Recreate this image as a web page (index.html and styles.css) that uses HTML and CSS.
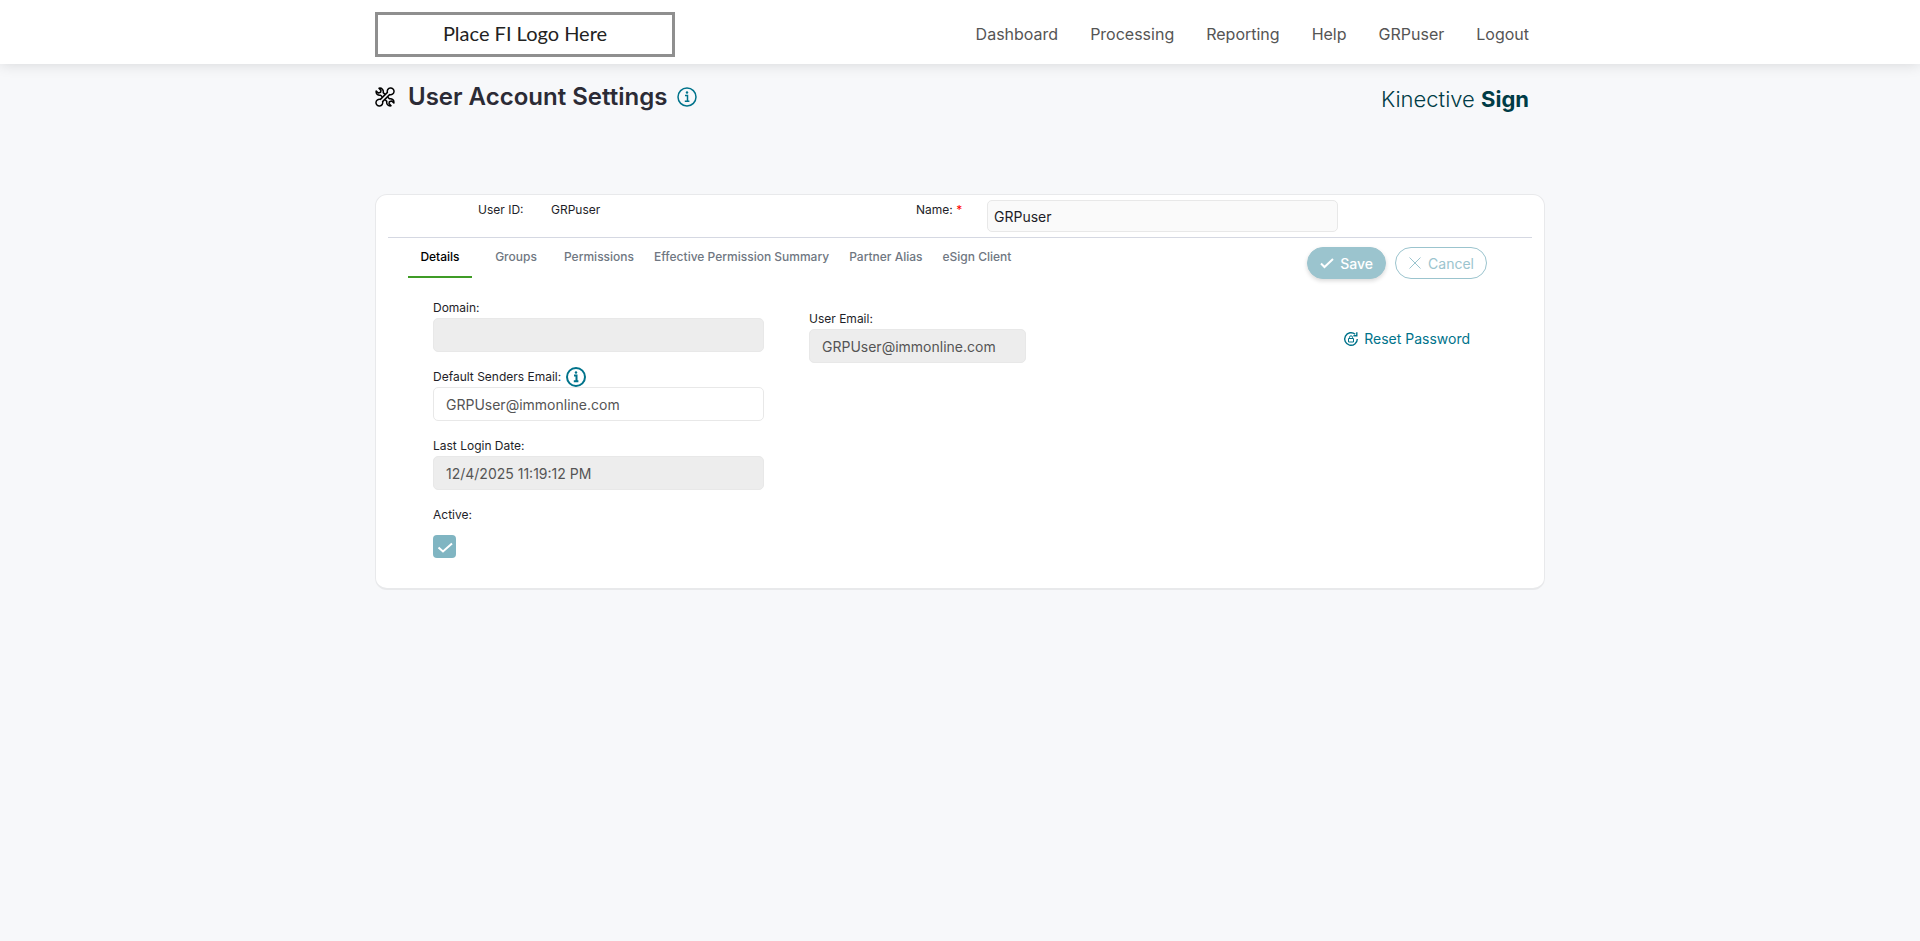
FILE: index.html
```html
<!DOCTYPE html>
<html lang="en">
<head>
    <meta charset="UTF-8">
    <meta name="viewport" content="width=device-width, initial-scale=1.0">
    <title>User Account Settings</title>
    <link rel="stylesheet" href="styles.css">
</head>
<body>

<header class="site-header">
    <div class="container header-inner">
        <a href="#" class="fi-logo">Place FI Logo Here</a>
        <nav class="main-nav">
            <a href="#">Dashboard</a>
            <a href="#">Processing</a>
            <a href="#">Reporting</a>
            <a href="#">Help</a>
            <a href="#">GRPuser</a>
            <a href="#">Logout</a>
        </nav>
    </div>
</header>

<main class="container">
    <div class="title-row">
        <svg class="tools-icon" viewBox="0 0 20 20" aria-hidden="true">
            <path d="M7.200 9.800 5.600 8.200C3 8.800.6 6.800 1.200 4L3.400 6 5.600 5.300 6 3.400 4 1.200C6.800.6 8.800 3 8.200 5.600L10 7.400M12.800 10.200 14.400 11.800C17 11.200 19.400 13.200 18.800 16L16.600 14 14.400 14.700 14 16.600 16 18.800C13.200 19.400 11.200 17 11.800 14.400L10.200 12.800"/>
            <path d="M12.400 5.400A3.400 3.400 0 1 1 14.600 7.600L7.600 14.600A3.400 3.400 0 1 1 5.400 12.400Z"/>
        </svg>
        <h1>User Account Settings</h1>
        <button type="button" class="info-btn" aria-label="About this page">
            <svg viewBox="0 0 20 20"><circle cx="10" cy="10" r="9"/><path d="M8 8.500h2.500v5.500M7.800 14.200h4.600"/><circle class="dot" cx="10" cy="5.500" r="1.200"/></svg>
        </button>
        <div class="brand">Kinective <b>Sign</b></div>
    </div>

    <form class="card">
        <div class="id-row">
            <span>User ID:</span>
            <span>GRPuser</span>
            <label for="name">Name: <span class="required">*</span></label>
            <input type="text" id="name" class="name-input" value="GRPuser" readonly>
        </div>

        <div class="toolbar">
            <nav class="tabs">
                <a href="#" class="tab active">Details</a>
                <a href="#" class="tab groups">Groups</a>
                <a href="#" class="tab">Permissions</a>
                <a href="#" class="tab">Effective Permission Summary</a>
                <a href="#" class="tab">Partner Alias</a>
                <a href="#" class="tab">eSign Client</a>
            </nav>
            <div class="actions">
                <button type="button" class="btn btn-save" disabled>
                    <svg viewBox="0 0 14 14" aria-hidden="true"><path d="M1 7.500 4.500 11 13 3"/></svg>
                    Save
                </button>
                <button type="button" class="btn btn-cancel" disabled>
                    <svg viewBox="0 0 14 14" aria-hidden="true"><path d="M1.500 1.500l11 11M12.500 1.500l-11 11"/></svg>
                    Cancel
                </button>
            </div>
        </div>

        <div class="details">
            <div class="column">
                <div class="field">
                    <label for="domain">Domain:</label>
                    <input type="text" id="domain" disabled>
                </div>
                <div class="field">
                    <div class="label-row">
                        <label for="sender">Default Senders Email:</label>
                        <button type="button" class="info-btn info-bold" aria-label="About default senders email">
                            <svg viewBox="0 0 20 20"><circle cx="10" cy="10" r="9"/><path d="M8 8.500h2.500v5.500M7.800 14.200h4.600"/><circle class="dot" cx="10" cy="5.500" r="1.200"/></svg>
                        </button>
                    </div>
                    <input type="text" id="sender" value="GRPUser@immonline.com">
                </div>
                <div class="field">
                    <label for="last-login">Last Login Date:</label>
                    <input type="text" id="last-login" value="12/4/2025 11:19:12 PM" disabled>
                </div>
                <div class="field">
                    <label for="active">Active:</label>
                    <input type="checkbox" id="active" class="checkbox" checked disabled>
                </div>
            </div>

            <div class="column column-email">
                <div class="field">
                    <label for="user-email">User Email:</label>
                    <input type="text" id="user-email" value="GRPUser@immonline.com" disabled>
                </div>
            </div>

            <a href="#" class="reset-link">
                <svg viewBox="0 0 14 14" aria-hidden="true">
                    <path d="M13.300 7A6.300 6.300 0 1 1 11.200 2.300M12.800.3v3.500H9.400"/>
                    <path class="lock" d="M4.500 6.500h5v3.500h-5zM5.500 6.500V5.300a1.500 1.500 0 0 1 3 0v1.200"/>
                </svg>
                Reset Password
            </a>
        </div>
    </form>
</main>

</body>
</html>
```
FILE: styles.css
```css
* {
    box-sizing: border-box;
}

body {
    margin: 0;
    background: #f7f8fa;
    font-family: Inter, sans-serif;
    font-size: 12px;
    line-height: 18px;
    color: #1e1e28;
}

a {
    text-decoration: none;
}

button,
input {
    font-family: inherit;
}

svg {
    display: block;
    flex: none;
    fill: none;
    stroke: currentColor;
}

.container {
    max-width: 1170px;
    margin: 0 auto;
}

/* Header */
.site-header {
    background: #fff;
    box-shadow: 0 0 14px rgba(0, 0, 0, 0.14);
}

.header-inner {
    display: flex;
    align-items: center;
    justify-content: space-between;
    min-height: 64px;
    padding: 12px 16px 7px 0;
}

.fi-logo {
    width: 300px;
    padding: 6px 0 9px;
    border: 3px solid #8f8f8f;
    font-family: Lato, sans-serif;
    font-size: 20px;
    line-height: 24px;
    text-align: center;
    color: #222;
}

.main-nav {
    display: flex;
    gap: 32px;
    padding-bottom: 2px;
    font-size: 16px;
    line-height: 24px;
}

.main-nav a {
    color: #555;
}

/* Page title */
.title-row {
    display: flex;
    align-items: center;
    padding: 16px 16px 0 0;
    margin-bottom: 81px;
}

.tools-icon {
    width: 20px;
    height: 20px;
    margin-right: 13px;
    stroke: #000;
    stroke-width: 1.5;
    stroke-linejoin: round;
}

h1 {
    margin: 0;
    font-size: 24px;
    font-weight: 600;
    line-height: 32px;
    color: #2b2b35;
}

.info-btn {
    padding: 0;
    border: 0;
    background: none;
    color: #00738b;
}

.info-btn svg {
    width: 20px;
    height: 20px;
    stroke-width: 1.5;
}

.info-btn .dot {
    fill: currentColor;
    stroke: none;
}

.title-row .info-btn {
    margin-left: 10px;
}

.info-bold svg {
    stroke-width: 2;
}

.brand {
    margin-left: auto;
    padding-top: 5px;
    font-size: 22px;
    font-weight: 300;
    line-height: 28px;
    color: #003c46;
}

.brand b {
    font-weight: 700;
}

/* Card */
.card {
    padding: 0 12px 30px;
    background: #fff;
    border: 1px solid #e8e9eb;
    border-bottom-width: 2px;
    border-radius: 12px;
}

.id-row {
    display: grid;
    grid-template-columns: 73fr 365fr 71fr 351fr 194fr;
    align-items: start;
    padding: 5px 0 5px 90px;
    border-bottom: 1px solid #d5d8e2;
    line-height: 20px;
}

.required {
    color: #f00;
}

.name-input {
    width: 100%;
    height: 32px;
    padding: 0 6px;
    border: 1px solid #e8e8e8;
    border-radius: 5px;
    background: #fafafa;
    font-size: 14px;
    color: #1e1e28;
}

.toolbar {
    display: flex;
    align-items: flex-start;
    justify-content: space-between;
    padding: 0 45px 0 20px;
}

.tabs {
    display: flex;
}

.tab {
    min-width: 64px;
    padding: 0 10px;
    border-bottom: 2px solid transparent;
    font-weight: 500;
    line-height: 38px;
    text-align: center;
    color: #6f7782;
}

.tab.active {
    margin-right: 12px;
    border-color: #3f9c26;
    color: #000;
}

.tab.groups {
    margin-right: 6px;
}

.actions {
    display: flex;
    gap: 9px;
    padding-top: 9px;
}

.btn {
    display: flex;
    align-items: center;
    gap: 6px;
    height: 32px;
    padding: 0 12px;
    border: 1px solid #9bc4ce;
    border-radius: 16px;
    font-size: 14px;
}

.btn svg {
    width: 14px;
    height: 14px;
}

.btn-save {
    background: #9bc4ce;
    box-shadow: 0 2px 4px rgba(0, 0, 0, 0.15);
    font-weight: 500;
    color: #fff;
}

.btn-save svg {
    stroke-width: 2;
}

.btn-cancel {
    background: #fff;
    color: #9bc4ce;
}

/* Details tab */
.details {
    display: grid;
    grid-template-columns: 331fr 217fr 399fr;
    column-gap: 45px;
    align-items: start;
    padding: 20px 62px 0 45px;
}

.column {
    display: grid;
    gap: 16px;
}

.column-email {
    padding-top: 11px;
}

.field {
    display: grid;
    gap: 1px;
}

.label-row {
    display: flex;
    align-items: center;
    gap: 5px;
    height: 18px;
}

.field input {
    width: 100%;
    height: 34px;
    margin: 0;
    padding: 0 12px;
    border: 1px solid #e8e8e8;
    border-radius: 5px;
    background: #fff;
    font-size: 14px;
    color: #555;
}

.field input:disabled {
    background: #ededed;
}

.field .checkbox:disabled {
    appearance: none;
    width: 23px;
    height: 23px;
    margin-top: 10px;
    padding: 0;
    border: 0;
    border-radius: 4px;
    background: #80b5c2 url("data:image/svg+xml,%3Csvg xmlns='http://www.w3.org/2000/svg' viewBox='0 0 23 23'%3E%3Cpath d='M5.500 12.500 10 16.500 19 8.500' fill='none' stroke='white' stroke-width='2'/%3E%3C/svg%3E");
}

.reset-link {
    display: flex;
    align-items: center;
    justify-self: end;
    gap: 6px;
    padding-top: 30px;
    font-size: 14px;
    line-height: 20px;
    color: #00738b;
}

.reset-link svg {
    width: 14px;
    height: 14px;
    overflow: visible;
    stroke-width: 1.4;
}

.reset-link .lock {
    stroke-width: 1;
}
```
